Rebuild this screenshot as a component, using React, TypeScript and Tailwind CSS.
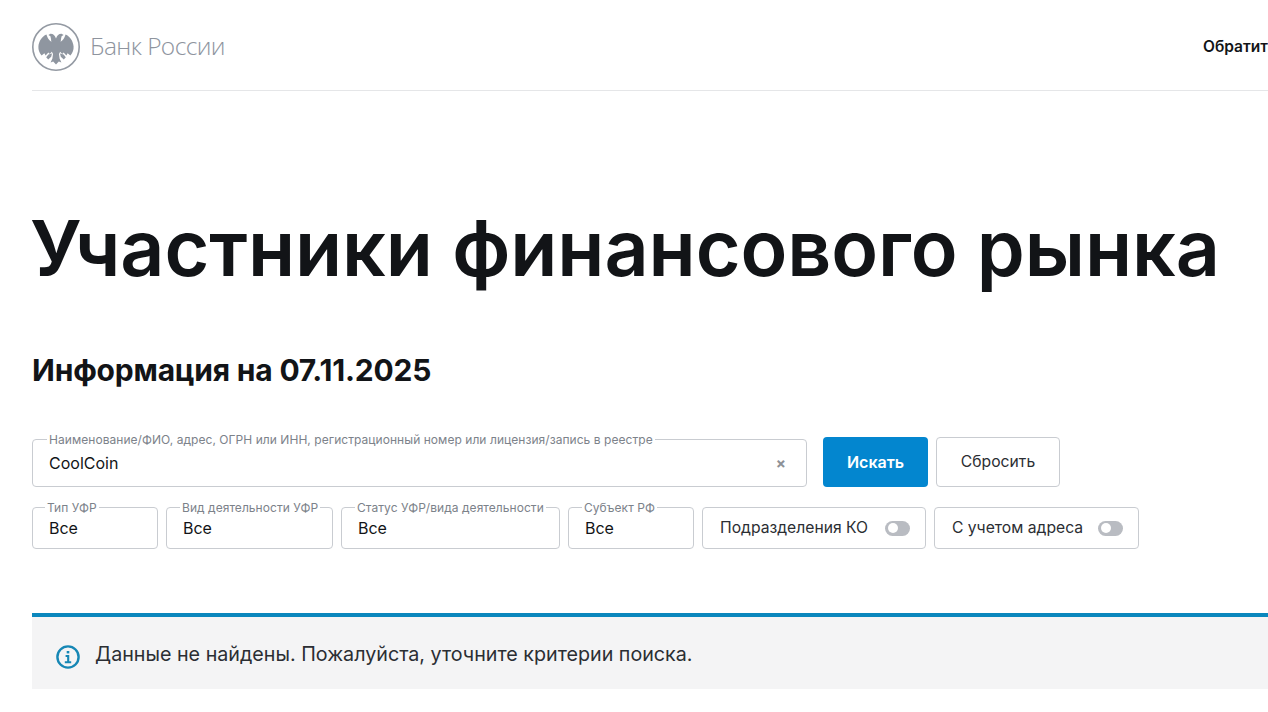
const font = { fontFamily: 'Inter, "Noto Sans", sans-serif' };

function Eagle() {
  return (
    <svg width="48" height="48" viewBox="0 0 48 48" className="shrink-0">
      <circle cx="24" cy="24" r="23.2" fill="#fff" stroke="#949aa3" strokeWidth="1.6" />
      <g fill="#8f96a0">
        <path d="M24 15.5 C23 12.5 21 10.6 18.4 10.8 L16.4 12 L18.4 13.2 L19 16 L19.6 22 H28.4 L29 16 L29.6 13.2 L31.6 12 L29.6 10.8 C27 10.6 25 12.5 24 15.5 Z" />
        <path d="M14.4 11.4 C10 13.4 6.8 18 6.4 23.4 C6.2 26.6 7.4 30 9.6 32.6 L12.4 30.2 L13.6 32.4 L16.4 29.6 L17.8 31 L21.4 27 L21 20 C18.8 18.4 16.4 16.6 15.6 14.4 Z" />
        <path d="M33.6 11.4 C38 13.4 41.2 18 41.6 23.4 C41.8 26.6 40.6 30 38.4 32.6 L35.6 30.2 L34.4 32.4 L31.6 29.6 L30.2 31 L26.6 27 L27 20 C29.2 18.4 31.6 16.6 32.4 14.4 Z" />
        <path d="M20 19 H28 L29 27 L27 31 L27.6 35.6 L29.4 39.4 L26.8 38.4 L24 41.6 L21.2 38.4 L18.6 39.4 L20.4 35.6 L21 31 L19 27 Z" />
        <path d="M16.4 31.4 L20 30.6 L19.2 33.8 L16.2 36.6 L14.2 34.2 Z" />
        <path d="M31.6 31.4 L28 30.6 L28.8 33.8 L31.8 36.6 L33.8 34.2 Z" />
      </g>
    </svg>
  );
}

function Legend({ text, left }: { text: string; left: string }) {
  return (
    <span className={`absolute top-[-7px] ${left} bg-white px-[2px] text-[12px] leading-[13px] tracking-[0.05px] whitespace-nowrap text-[#7c828a]`}>
      {text}
    </span>
  );
}

function Select({ label, width, left = 'left-[13px]' }: { label: string; width: string; left?: string }) {
  return (
    <div className={`relative flex h-[42px] shrink-0 items-center rounded-[4px] border border-[#c9ccd1] pl-4 text-[16px] text-[#121417] ${width}`}>
      <Legend text={label} left={left} />
      <span>Все</span>
    </div>
  );
}

function Toggle({ label, width }: { label: string; width: string }) {
  return (
    <div className={`flex h-[42px] shrink-0 items-center justify-between rounded-[4px] border border-[#c9ccd1] pr-[15px] pl-[17px] text-[15.7px] text-[#2b2e33] ${width}`}>
      <span className="whitespace-nowrap">{label}</span>
      <span className="flex h-[15px] w-[25px] items-center rounded-full bg-[#b9bcc2] pl-[3px]">
        <span className="h-[10px] w-[10px] rounded-full bg-white" />
      </span>
    </div>
  );
}

export default function App() {
  return (
    <div className="h-[712px] w-[1268px] overflow-hidden bg-white pl-8" style={font}>
      <header className="flex h-[91px] w-[1236px] items-center justify-between overflow-hidden border-b border-[#e5e6e8] pt-[4px]">
        <div className="flex items-center gap-[10px]">
          <Eagle />
          <span className="mb-[2px] text-[24.5px] tracking-[-0.6px] text-[#8e949e]" style={{ fontFamily: '"Open Sans", sans-serif', fontWeight: 300 }}>Банк России</span>
        </div>
        <span className="w-[65px] overflow-hidden text-[15.5px] font-semibold whitespace-nowrap text-[#121417]">Обратиться</span>
      </header>

      <h1 className="mt-[99px] -ml-[2px] text-[77px] leading-[116px] font-semibold tracking-[-0.08px] whitespace-nowrap text-[#121417]">
        Участники финансового рынка
      </h1>

      <h2 className="mt-[46px] text-[30px] leading-[36px] font-bold tracking-[-0.2px] text-[#121417]">
        Информация на 07.11.2025
      </h2>

      <div className="mt-[49px] flex items-start gap-2">
        <div className="relative mt-[2px] mr-2 flex h-[48px] w-[775px] items-center justify-between rounded-[4px] border border-[#c9ccd1] pr-5 pl-4 text-[16px] text-[#121417]">
          <Legend text="Наименование/ФИО, адрес, ОГРН или ИНН, регистрационный номер или лицензия/запись в реестре" left="left-[14px]" />
          <span>CoolCoin</span>
          <span className="text-[15px] leading-none font-bold text-[#8d9197]">×</span>
        </div>
        <button className="h-[50px] w-[105px] rounded-[4px] bg-[#0386cf] text-[16px] font-semibold text-white">Искать</button>
        <button className="h-[50px] w-[124px] rounded-[4px] border border-[#c9ccd1] bg-white text-[15.7px] text-[#2b2e33]">Сбросить</button>
      </div>

      <div className="mt-[20px] flex gap-2">
        <Select label="Тип УФР" width="w-[126px]" left="left-[12px]" />
        <Select label="Вид деятельности УФР" width="w-[167px]" />
        <Select label="Статус УФР/вида деятельности" width="w-[219px]" />
        <Select label="Субъект РФ" width="w-[126px]" />
        <Toggle label="Подразделения КО" width="w-[224px]" />
        <Toggle label="С учетом адреса" width="w-[205px]" />
      </div>

      <div className="mt-[64px] flex h-[76px] w-[1236px] items-center gap-[15px] border-t-4 border-[#0a87bd] bg-[#f4f4f5] pt-[4px] pl-6 text-[19.7px] text-[#2b2e33]">
        <svg width="24" height="24" viewBox="0 0 24 24" fill="none" stroke="#1687b5" strokeWidth="2.4" className="mt-[4px] shrink-0">
          <circle cx="12" cy="12" r="10.6" />
          <path d="M12 6v2.4" strokeWidth="2.6" />
          <path d="M9.6 11h2.6v6M8.8 17.2h6.4" strokeWidth="2.1" />
        </svg>
        <span>Данные не найдены. Пожалуйста, уточните критерии поиска.</span>
      </div>
    </div>
  );
}
